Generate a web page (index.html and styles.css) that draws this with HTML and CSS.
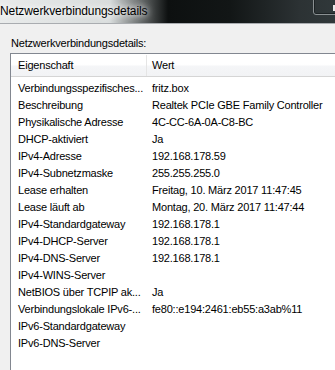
FILE: index.html
```html
<!DOCTYPE html>
<html lang="de">
<head>
<meta charset="utf-8">
<title>Netzwerkverbindungsdetails</title>
<link rel="stylesheet" href="styles.css">
</head>
<body>
<div class="window">
  <div class="titlebar">
    <span class="title">Netzwerkverbindungsdetails</span>
    <div class="capbtn"><span class="capglyph"></span></div>
  </div>
  <div class="content">
    <div class="label">Netzwerkverbindungsdetails:</div>
    <div class="list">
      <div class="header">
        <div class="hcell c1">Eigenschaft</div>
        <div class="hcell c2">Wert</div>
      </div>
      <div class="rows">
        <div class="row"><span class="c1">Verbindungsspezifisches...</span><span class="c2">fritz.box</span></div>
        <div class="row"><span class="c1">Beschreibung</span><span class="c2">Realtek PCIe GBE Family Controller</span></div>
        <div class="row"><span class="c1">Physikalische Adresse</span><span class="c2">4C-CC-6A-0A-C8-BC</span></div>
        <div class="row"><span class="c1">DHCP-aktiviert</span><span class="c2">Ja</span></div>
        <div class="row"><span class="c1">IPv4-Adresse</span><span class="c2">192.168.178.59</span></div>
        <div class="row"><span class="c1">IPv4-Subnetzmaske</span><span class="c2">255.255.255.0</span></div>
        <div class="row"><span class="c1">Lease erhalten</span><span class="c2">Freitag, 10. März 2017 11:47:45</span></div>
        <div class="row"><span class="c1">Lease läuft ab</span><span class="c2">Montag, 20. März 2017 11:47:44</span></div>
        <div class="row"><span class="c1">IPv4-Standardgateway</span><span class="c2">192.168.178.1</span></div>
        <div class="row"><span class="c1">IPv4-DHCP-Server</span><span class="c2">192.168.178.1</span></div>
        <div class="row"><span class="c1">IPv4-DNS-Server</span><span class="c2">192.168.178.1</span></div>
        <div class="row"><span class="c1">IPv4-WINS-Server</span><span class="c2"></span></div>
        <div class="row"><span class="c1">NetBIOS über TCPIP ak...</span><span class="c2">Ja</span></div>
        <div class="row"><span class="c1">Verbindungslokale IPv6-...</span><span class="c2">fe80::e194:2461:eb55:a3ab%11</span></div>
        <div class="row"><span class="c1">IPv6-Standardgateway</span><span class="c2"></span></div>
        <div class="row"><span class="c1">IPv6-DNS-Server</span><span class="c2"></span></div>
      </div>
    </div>
  </div>
</div>
</body>
</html>
```

FILE: styles.css
```css
html, body {
  margin: 0;
  padding: 0;
}
body {
  width: 335px;
  height: 370px;
  overflow: hidden;
  background: #f0f0f0;
  font-family: "Liberation Sans", Arial, sans-serif;
  color: #000;
}
.window {
  display: flex;
  flex-direction: column;
  height: 370px;
  overflow: hidden;
}
.titlebar {
  position: relative;
  height: 23px;
  flex: none;
  display: flex;
  align-items: center;
  overflow: hidden;
  background: linear-gradient(90deg, #e9ebeb 0px, #d8dcdc 110px, #6a6e6e 140px, #0d1010 168px, #121616 230px, #2c3234 300px, #30383a 335px);
  border-bottom: 1px solid #a9acb0;
}
.title {
  font-size: 12px;
  letter-spacing: -0.1px;
  margin-top: -1px;
  color: #000;
  text-shadow: 0 0 6px #fff, 0 0 10px #fff;
}
.capbtn {
  position: absolute;
  left: 313px;
  top: -3px;
  width: 30px;
  height: 16px;
  border: 1px solid #8a9092;
  border-radius: 3px;
  box-shadow: inset 0 0 0 1px #1c2224;
}
.capglyph {
  position: absolute;
  left: 19px;
  top: 7px;
  width: 2px;
  height: 6px;
  background: #e8e8e8;
}
.content {
  flex: 1;
  min-height: 0;
  display: flex;
  flex-direction: column;
  padding: 13px 0 0 10px;
}
.label {
  flex: none;
  font-size: 11px;
  letter-spacing: -0.2px;
  line-height: 13px;
  padding-left: 1px;
  margin-bottom: 3px;
}
.list {
  flex: 1;
  min-height: 0;
  overflow: hidden;
  background: #fff;
  border-top: 1px solid #828790;
  border-left: 1px solid #828790;
  font-size: 11px;
  letter-spacing: -0.2px;
}
.header {
  display: flex;
  height: 23px;
  background: linear-gradient(#ffffff 0%, #ffffff 45%, #f4f5f7 55%, #f2f3f5 100%);
  border-top: 1px solid #ffffff;
  border-bottom: 1px solid #d5d5d5;
  box-sizing: border-box;
}
.hcell {
  display: flex;
  align-items: center;
  line-height: 13px;
}
.hcell.c1 {
  width: 128px;
  padding-left: 7px;
  border-right: 1px solid #e5e5e5;
}
.hcell.c2 {
  padding-left: 5px;
}
.rows {
  padding-top: 3px;
}
.row {
  display: flex;
  height: 17px;
  line-height: 17px;
  white-space: nowrap;
}
.row .c1 {
  width: 129px;
  padding-left: 7px;
  flex: none;
  overflow: hidden;
}
.row .c2 {
  padding-left: 5px;
}
```
